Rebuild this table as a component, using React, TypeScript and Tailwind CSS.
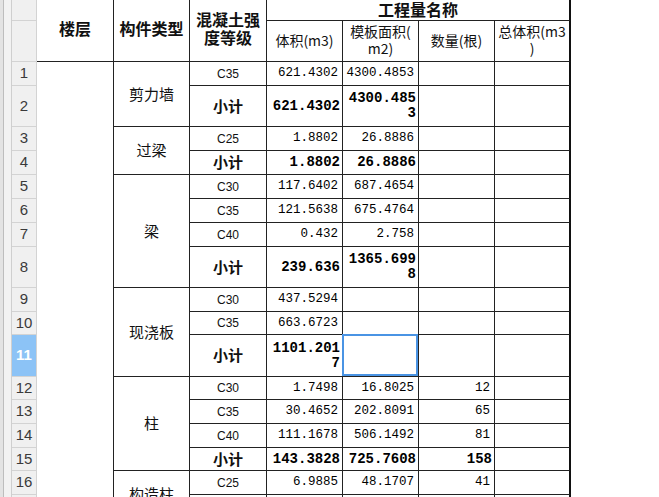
import type { ReactNode } from 'react'

// ─── Sheet data ───────────────────────────────────────────────────────────────
interface Row {
  n: number
  kind?: [string, string]
  grade: string
  sub?: boolean
  vals: string[]
  sel?: number
}

const ROWS: Row[] = [
  { n: 1, kind: ['剪力墙', 'row-span-2'], grade: 'C35', vals: ['621.4302', '4300.4853', '', ''] },
  { n: 2, grade: '小计', sub: true, vals: ['621.4302', '4300.4853', '', ''] },
  { n: 3, kind: ['过梁', 'row-span-2'], grade: 'C25', vals: ['1.8802', '26.8886', '', ''] },
  { n: 4, grade: '小计', sub: true, vals: ['1.8802', '26.8886', '', ''] },
  { n: 5, kind: ['梁', 'row-span-4'], grade: 'C30', vals: ['117.6402', '687.4654', '', ''] },
  { n: 6, grade: 'C35', vals: ['121.5638', '675.4764', '', ''] },
  { n: 7, grade: 'C40', vals: ['0.432', '2.758', '', ''] },
  { n: 8, grade: '小计', sub: true, vals: ['239.636', '1365.6998', '', ''] },
  { n: 9, kind: ['现浇板', 'row-span-3'], grade: 'C30', vals: ['437.5294', '', '', ''] },
  { n: 10, grade: 'C35', vals: ['663.6723', '', '', ''] },
  { n: 11, grade: '小计', sub: true, vals: ['1101.2017', '', '', ''], sel: 1 },
  { n: 12, kind: ['柱', 'row-span-4'], grade: 'C30', vals: ['1.7498', '16.8025', '12', ''] },
  { n: 13, grade: 'C35', vals: ['30.4652', '202.8091', '65', ''] },
  { n: 14, grade: 'C40', vals: ['111.1678', '506.1492', '81', ''] },
  { n: 15, grade: '小计', sub: true, vals: ['143.3828', '725.7608', '158', ''] },
  { n: 16, kind: ['构造柱', 'row-span-2'], grade: 'C25', vals: ['6.9885', '48.1707', '41', ''] },
  { n: 17, grade: '', vals: ['', '', '', ''] },
]

const CJK = 'font-["Noto_Sans_CJK_SC",sans-serif]'
const LINE = 'border-r border-b border-[#222]'

function RowHead({ n, sel }: { n?: number; sel?: boolean }) {
  return (
    <div
      className={
        'flex items-center justify-center border-r border-b border-[#d3d3d3] font-["Liberation_Sans",sans-serif] text-[15px] ' +
        (sel ? 'bg-[#8cc3f6] text-white font-bold' : 'bg-[#f0f0f0] text-[#3a3a3a]')
      }
    >
      {n}
    </div>
  )
}

function Cell({ v, bold, last, sel }: { v: string; bold?: boolean; last?: boolean; sel?: boolean }) {
  return (
    <div
      className={
        'relative flex items-center justify-end px-[2px] text-black font-["Liberation_Mono",monospace] ' +
        (bold ? 'font-bold text-[14px] leading-[15px] ' : 'text-[12.5px] pr-[4px] ') +
        (last ? 'border-b border-[#222] border-r-2 border-r-[#111]' : LINE)
      }
    >
      <span className="text-right break-all">{v}</span>
      {sel && <div className="absolute -left-px -top-px right-0 bottom-0 border-2 border-[#4a94e4]" />}
    </div>
  )
}

export default function App() {
  const body: ReactNode[] = []
  ROWS.forEach((r) => {
    body.push(<RowHead key={`h${r.n}`} n={r.n} sel={r.n === 11} />)
    if (r.n === 1) body.push(<div key="floor" className={'row-span-17 ' + LINE} />)
    if (r.kind)
      body.push(
        <div key={`k${r.n}`} className={`${r.kind[1]} flex items-center justify-center text-[15px] text-[#111] ${CJK} ${LINE}`}>
          {r.kind[0]}
        </div>
      )
    body.push(
      <div
        key={`g${r.n}`}
        className={
          'flex items-center justify-center text-[#111] ' +
          (r.sub ? `font-bold text-[15px] ${CJK} ` : 'text-[12px] font-["Liberation_Sans",sans-serif] ') +
          LINE
        }
      >
        {r.grade}
      </div>
    )
    r.vals.forEach((v, i) =>
      body.push(<Cell key={`v${r.n}-${i}`} v={v} bold={r.sub} last={i === 3} sel={r.sel === i} />)
    )
  })

  return (
    <div className="h-screen w-full overflow-hidden bg-white">
      <div className="grid w-[571px] grid-cols-[12px_25px_77px_76px_77px_76px_76px_76px_76px] grid-rows-[21px_41px_24px_41px_24px_24px_24px_24px_24px_41px_24px_23px_42px_23px_24px_24px_23px_24px_24px]">
        {/* outline strip */}
        <div className="col-start-1 row-span-full flex border-r border-[#cfcfcf]">
          <div className="w-[3px] bg-[#e3e3e3]" />
          <div className="w-px bg-[#bdbdbd]" />
          <div className="flex-1 bg-[#f2f2f2]" />
        </div>

        {/* header */}
        <RowHead />
        <div className={`row-span-2 flex items-center justify-center pb-[6px] font-bold text-[16px] text-[#111] ${CJK} ${LINE}`}>
          楼层
        </div>
        <div className={`row-span-2 flex items-center justify-center pb-[6px] font-bold text-[16px] text-[#111] ${CJK} ${LINE}`}>
          构件类型
        </div>
        <div className={`row-span-2 flex items-center justify-center pb-[6px] text-center font-bold text-[16px] leading-[18px] text-[#111] ${CJK} ${LINE}`}>
          混凝土强<br />度等级
        </div>
        <div className={`col-span-4 flex items-center justify-center pb-[2px] font-bold text-[16px] leading-[18px] text-[#111] ${CJK} border-b border-[#222] border-r-2 border-r-[#111]`}>
          工程量名称
        </div>

        <RowHead />
        <div className={`flex items-center justify-center pb-[2px] text-[14px] text-[#111] ${CJK} ${LINE}`}>体积(m3)</div>
        <div className={`flex items-center justify-center pb-[3px] text-center text-[14px] leading-[17px] text-[#111] ${CJK} ${LINE}`}>
          模板面积(<br />m2)
        </div>
        <div className={`flex items-center justify-center pb-[2px] text-[14px] text-[#111] ${CJK} ${LINE}`}>数量(根)</div>
        <div className={`flex items-center justify-center pb-[3px] text-center text-[14px] leading-[17px] text-[#111] ${CJK} border-b border-[#222] border-r-2 border-r-[#111]`}>
          总体积(m3<br />)
        </div>

        {body}
      </div>
    </div>
  )
}
